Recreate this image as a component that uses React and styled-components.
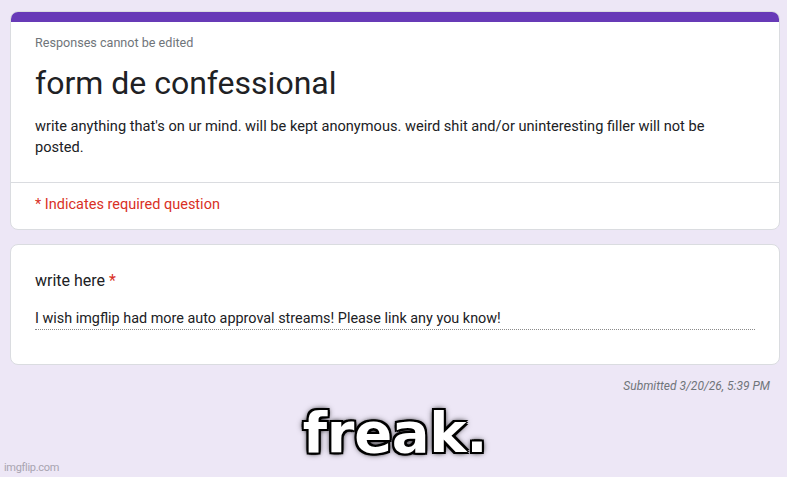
import React from "react";
import styled, { createGlobalStyle } from "styled-components";

const GlobalStyle = createGlobalStyle`
  html, body {
    margin: 0;
    padding: 0;
    background: #ede7f6;
  }
  body {
    font-family: Roboto, "Liberation Sans", Arial, sans-serif;
    color: #202124;
  }
`;

const Page = styled.div`
  width: 787px;
  height: 477px;
  box-sizing: border-box;
  padding: 11px 7px 0 10px;
  display: flex;
  flex-direction: column;
  gap: 14px;
  position: relative;
  overflow: hidden;
`;

const Card = styled.div`
  background: #fff;
  border: 1px solid #dadce0;
  border-radius: 8px;
  overflow: hidden;
  height: ${(p) => p.$height}px;
  box-sizing: border-box;
  display: flex;
  flex-direction: column;
  flex-shrink: 0;
`;

const TopBar = styled.div`
  height: 10px;
  background: #673ab7;
  flex-shrink: 0;
`;

const Header = styled.div`
  padding: 13px 24px 0 24px;
  height: 161px;
  box-sizing: border-box;
  border-bottom: 1px solid #dadce0;
`;

const Notice = styled.div`
  font-size: 12.6px;
  line-height: 16px;
  color: #70757a;
`;

const Title = styled.h1`
  margin: 12px 0 0;
  font-size: 32px;
  font-weight: 400;
  line-height: 40px;
  color: #202124;
`;

const Description = styled.p`
  margin: 13px 0 0;
  font-size: 14.6px;
  line-height: 21px;
  color: #202124;
  padding-right: 30px;
`;

const Required = styled.div`
  padding: 12px 24px 10px;
  font-size: 14.5px;
  line-height: 20px;
  color: #d93025;
`;

const Question = styled.div`
  padding: 24px 24px 0 24px;
`;

const QuestionTitle = styled.div`
  font-size: 16px;
  line-height: 24px;
  color: #202124;

  span {
    color: #d93025;
  }
`;

const Answer = styled.div`
  margin-top: 17px;
  padding-bottom: 1px;
  font-size: 14.4px;
  line-height: 18px;
  color: #202124;
  border-bottom: 1px dotted #8a8a8a;
`;

const Submitted = styled.div`
  align-self: flex-end;
  margin-right: 10px;
  font-size: 12px;
  font-style: italic;
  color: #70757a;
`;

const Caption = styled.div`
  align-self: center;
  margin-top: -4px;
  font-family: "DejaVu Sans", "Liberation Sans", sans-serif;
  font-weight: 700;
  font-size: 56px;
  line-height: 60px;
  color: #fff;
  letter-spacing: -0.3px;
  text-shadow:
    2px 2px 0 #000, -2px 2px 0 #000, 2px -2px 0 #000, -2px -2px 0 #000,
    0 2px 0 #000, 0 -2px 0 #000, 2px 0 0 #000, -2px 0 0 #000,
    0 0 4px #000, 0 0 7px #000;
`;

const Watermark = styled.div`
  position: absolute;
  left: 4px;
  bottom: 3px;
  font-size: 11px;
  color: #a8a4b0;
  letter-spacing: -0.3px;
`;

export default function App() {
  return (
    <>
      <GlobalStyle />
      <Page>
        <Card $height={219}>
          <TopBar />
          <Header>
            <Notice>Responses cannot be edited</Notice>
            <Title>form de confessional</Title>
            <Description>
              write anything that's on ur mind. will be kept anonymous. weird
              shit and/or uninteresting filler will not be posted.
            </Description>
          </Header>
          <Required>* Indicates required question</Required>
        </Card>
        <Card $height={121}>
          <Question>
            <QuestionTitle>
              write here <span>*</span>
            </QuestionTitle>
            <Answer>
              I wish imgflip had more auto approval streams! Please link any you
              know!
            </Answer>
          </Question>
        </Card>
        <Submitted>Submitted 3/20/26, 5:39 PM</Submitted>
        <Caption>freak.</Caption>
        <Watermark>imgflip.com</Watermark>
      </Page>
    </>
  );
}
